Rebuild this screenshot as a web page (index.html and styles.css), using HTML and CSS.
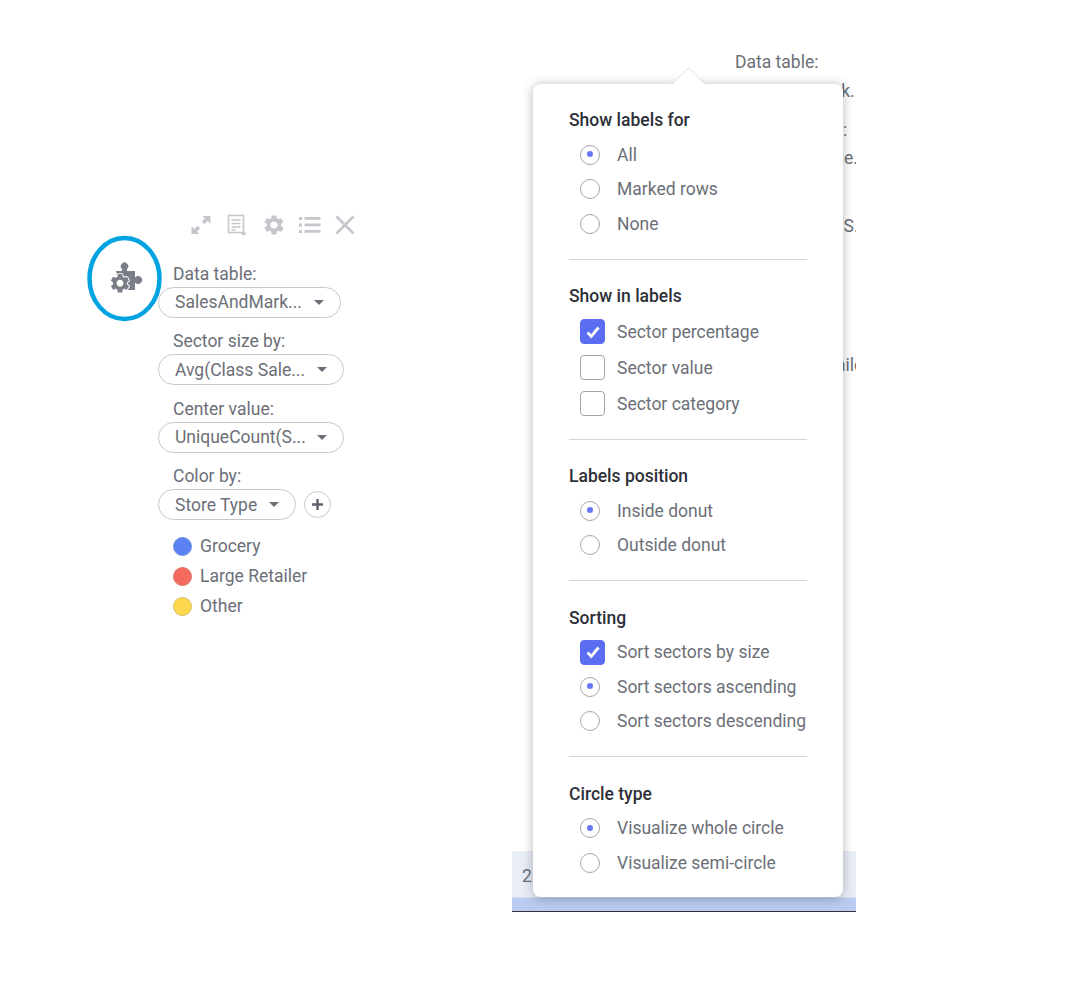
FILE: index.html
```html
<!DOCTYPE html>
<html lang="en">
<head>
<meta charset="utf-8">
<title>Donut chart properties</title>
<link rel="stylesheet" href="styles.css">
</head>
<body>
<svg class="defs" width="0" height="0" aria-hidden="true">
  <symbol id="gear" viewBox="0 0 24 24"><path d="M19.14 12.94c.04-.3.06-.61.06-.94 0-.32-.02-.64-.07-.94l2.03-1.58c.18-.14.23-.41.12-.61l-1.92-3.32c-.12-.22-.37-.29-.59-.22l-2.39.96c-.5-.38-1.03-.7-1.62-.94l-.36-2.54c-.04-.24-.24-.41-.48-.41h-3.84c-.24 0-.43.17-.47.41l-.36 2.54c-.59.24-1.13.57-1.62.94l-2.39-.96c-.22-.08-.47 0-.59.22L2.74 8.87c-.12.21-.08.47.12.61l2.03 1.58c-.05.3-.09.63-.09.94s.02.64.07.94l-2.03 1.58c-.18.14-.23.41-.12.61l1.92 3.32c.12.22.37.29.59.22l2.39-.96c.5.38 1.03.7 1.62.94l.36 2.54c.05.24.24.41.48.41h3.84c.24 0 .44-.17.47-.41l.36-2.54c.59-.24 1.13-.56 1.62-.94l2.39.96c.22.08.47 0 .59-.22l1.92-3.32c.12-.22.07-.47-.12-.61l-2.01-1.58zM12 15.6c-1.98 0-3.6-1.62-3.6-3.6s1.62-3.6 3.6-3.6 3.6 1.62 3.6 3.6-1.62 3.6-3.6 3.6z"/></symbol>
</svg>

<main class="stage">
  <section class="widget">
    <div class="toolbar">
      <svg class="tool" width="22" height="22" viewBox="0 0 22 22"><path d="M12.5 2h8v8l-3-3-3.2 3.2-2.5-2.5L15 4.500zM9.500 20h-8v-8l3 3 3.200-3.200 2.500 2.500L7 17.500z"/></svg>
      <svg class="tool" width="24" height="24" viewBox="0 0 24 24"><path class="tool-line" d="M3.500 2.500h15v17h-15zM6.500 7h9M6.500 10.500h9M6.500 14h9M6.500 17h4"/><path d="M15 19.500h7l-3.500 3.500z"/></svg>
      <svg class="tool" width="24" height="24"><use href="#gear"/></svg>
      <svg class="tool" width="22" height="24" viewBox="0 0 22 24"><path d="M0 4h3v3H0zM0 10.500h3v3H0zM0 17h3v3H0zM5.500 4h16v2.800h-16zM5.500 10.500h16v2.800h-16zM5.500 17h16v2.800h-16z"/></svg>
      <svg class="tool" width="22" height="24" viewBox="0 0 22 24"><path class="tool-x" d="M2.500 3.500l17 17M19.500 3.500l-17 17"/></svg>
    </div>
    <div class="config">
      <div class="badge">
        <svg class="badge-ring" width="76" height="88" viewBox="0 0 76 88"><ellipse cx="37.500" cy="43.500" rx="35" ry="40.500"/></svg>
        <svg class="badge-icon" width="42" height="42" viewBox="0 0 42 42">
          <path d="M11 13h6v-2a3.700 3.700 0 1 1 5 0v2h8v6.500a4 4 0 1 1 0 5V32H16z"/>
          <circle class="badge-hole" cx="15" cy="25.300" r="6"/>
          <use href="#gear" x="3.500" y="13.800" width="23" height="23" class="badge-gear"/>
        </svg>
      </div>
      <div class="fields">
        <div class="field">
          <div class="field-label">Data table:</div>
          <div class="pill pill-data"><span>SalesAndMark...</span><i class="caret"></i></div>
        </div>
        <div class="field">
          <div class="field-label">Sector size by:</div>
          <div class="pill pill-wide"><span>Avg(Class Sale...</span><i class="caret"></i></div>
        </div>
        <div class="field">
          <div class="field-label">Center value:</div>
          <div class="pill pill-wide"><span>UniqueCount(S...</span><i class="caret"></i></div>
        </div>
        <div class="field">
          <div class="field-label">Color by:</div>
          <div class="pill-row">
            <div class="pill pill-short"><span>Store Type</span><i class="caret"></i></div>
            <div class="add"><svg width="13" height="13" viewBox="0 0 13 13"><path d="M6.500 1v11M1 6.500h11"/></svg></div>
          </div>
        </div>
        <ul class="legend">
          <li><i class="dot dot-blue"></i>Grocery</li>
          <li><i class="dot dot-red"></i>Large Retailer</li>
          <li><i class="dot dot-yellow"></i>Other</li>
        </ul>
      </div>
    </div>
  </section>

  <section class="behind">
    <div class="fields fields-ghost">
      <div class="field">
        <div class="field-label">Data table:</div>
        <div class="pill pill-data"><span>SalesAndMark...</span></div>
      </div>
      <div class="field">
        <div class="field-label">Sector size by:</div>
        <div class="pill pill-wide"><span>Avg(Class Sale...</span></div>
      </div>
      <div class="field">
        <div class="field-label">Center value:</div>
        <div class="pill pill-wide"><span>UniqueCount(S...</span></div>
      </div>
      <div class="field">
        <div class="field-label">Color by:</div>
        <div class="pill pill-short"><span>Store Type</span></div>
      </div>
      <ul class="legend">
        <li><i class="dot"></i>Grocery</li>
        <li><i class="dot"></i>Large Retailer</li>
        <li><i class="dot"></i>Other</li>
      </ul>
    </div>
    <div class="strip"><span>2</span></div>
  </section>

  <section class="popover">
    <div class="group">
      <h3>Show labels for</h3>
      <label class="row radio-row"><i class="radio on"></i>All</label>
      <label class="row radio-row"><i class="radio"></i>Marked rows</label>
      <label class="row radio-row"><i class="radio"></i>None</label>
    </div>
    <div class="group group-tight">
      <h3>Show in labels</h3>
      <label class="row check-row"><i class="check on"><svg width="16" height="16" viewBox="0 0 16 16"><path d="M2.500 8.500l3.800 3.800L13.500 3.500"/></svg></i>Sector percentage</label>
      <label class="row check-row"><i class="check"></i>Sector value</label>
      <label class="row check-row"><i class="check"></i>Sector category</label>
    </div>
    <div class="group">
      <h3>Labels position</h3>
      <label class="row radio-row"><i class="radio on"></i>Inside donut</label>
      <label class="row radio-row"><i class="radio"></i>Outside donut</label>
    </div>
    <div class="group">
      <h3>Sorting</h3>
      <label class="row check-row sort-check"><i class="check on"><svg width="16" height="16" viewBox="0 0 16 16"><path d="M2.500 8.500l3.800 3.800L13.500 3.500"/></svg></i>Sort sectors by size</label>
      <label class="row radio-row"><i class="radio on"></i>Sort sectors ascending</label>
      <label class="row radio-row"><i class="radio"></i>Sort sectors descending</label>
    </div>
    <div class="group">
      <h3>Circle type</h3>
      <label class="row radio-row"><i class="radio on"></i>Visualize whole circle</label>
      <label class="row radio-row"><i class="radio"></i>Visualize semi-circle</label>
    </div>
  </section>
</main>
</body>
</html>
```

FILE: styles.css
```css
* { box-sizing: border-box; }

html, body {
  margin: 0;
  padding: 0;
  background: #fff;
}

body {
  font-family: Roboto, "Liberation Sans", sans-serif;
  font-size: 17.500px;
  color: #6c6f78;
  overflow: hidden;
}

.defs { position: absolute; }

.stage {
  position: relative;
  width: 1088px;
  height: 982px;
}

/* Left widget */
.widget {
  position: absolute;
  left: 88px;
  top: 213px;
  width: 280px;
}

.toolbar {
  display: flex;
  align-items: center;
  gap: 13px;
  margin-left: 102px;
  height: 24px;
}

.tool { fill: #c5c7cc; flex: none; }
.tool-line { fill: none; stroke: #c5c7cc; stroke-width: 1.6; }
.tool-x { fill: none; stroke: #c5c7cc; stroke-width: 2.600; }

.config {
  display: flex;
  align-items: flex-start;
  margin-top: -2px;
}

.badge {
  position: relative;
  flex: none;
  width: 70px;
  height: 88px;
}

.badge-ring {
  position: absolute;
  left: -1px;
  top: 0;
  fill: none;
  stroke: #00a3e2;
  stroke-width: 4.500;
}

.badge-icon {
  position: absolute;
  left: 17px;
  top: 23px;
  fill: #7b7e87;
}

.badge-hole { fill: #fff; }
.badge-gear { fill: #7b7e87; stroke: #fff; stroke-width: 2; paint-order: stroke; }

.fields {
  flex: none;
  padding-top: 25.500px;
}

.field {
  height: 67.500px;
}

.field-label {
  padding-left: 15px;
  height: 26px;
  line-height: 26px;
  white-space: nowrap;
}

.pill {
  display: flex;
  align-items: center;
  justify-content: space-between;
  height: 31px;
  padding: 0 16px;
  border: 1px solid #c6c8cc;
  border-radius: 16px;
  background: #fff;
  white-space: nowrap;
}

.pill-data { width: 183px; }
.pill-wide { width: 186px; }
.pill-short { width: 138px; }

.pill-row {
  display: flex;
  align-items: center;
  gap: 8px;
}

.caret {
  flex: none;
  width: 0;
  height: 0;
  border-left: 5px solid transparent;
  border-right: 5px solid transparent;
  border-top: 5.500px solid #6c6f78;
}

.add {
  display: flex;
  align-items: center;
  justify-content: center;
  width: 27px;
  height: 27px;
  border: 1px solid #c6c8cc;
  border-radius: 50%;
}

.add path { stroke: #5f626b; stroke-width: 2.400; fill: none; }

.legend {
  list-style: none;
  margin: 0;
  padding: .5px 0 0 15px;
}

.legend li {
  display: flex;
  align-items: center;
  gap: 8px;
  height: 30px;
  white-space: nowrap;
}

.dot {
  flex: none;
  width: 19px;
  height: 19px;
  border-radius: 50%;
}

.dot-blue { background: #5b82f2; border: 1px solid #6f8fe0; }
.dot-red { background: #f56a5c; border: 1px solid #d9756b; }
.dot-yellow { background: #ffd84f; border: 1px solid #d8c061; }

/* What lies behind the popover */
.behind {
  position: absolute;
  left: 512px;
  top: 38px;
  width: 344px;
  height: 874px;
  overflow: hidden;
}

.fields-ghost {
  margin-left: 208px;
  padding-top: 11px;
  width: 300px;
}

.fields-ghost .pill {
  border-color: transparent;
  background: transparent;
}

/* Only the tail of this value shows beside the popover */
.fields-ghost .pill-data span { clip-path: inset(0 0 0 105px); }

.fields-ghost .dot { visibility: hidden; }

.strip {
  position: absolute;
  left: 0;
  right: 0;
  bottom: 0;
  height: 61px;
  padding: 15px 0 0 10px;
  background: linear-gradient(#e9edf6 0, #e9edf6 46px, #b9cbef 47px, #b9cbef 60px, #333 60px);
}

/* Popover */
.popover {
  position: absolute;
  left: 533px;
  top: 84px;
  width: 310px;
  height: 813px;
  padding: 23px 36px 0;
  background: #fff;
  border-radius: 8px;
  box-shadow: 0 1px 12px rgba(0, 0, 0, .28);
}

.popover::before {
  content: "";
  position: absolute;
  left: 143px;
  top: -12px;
  width: 24px;
  height: 24px;
  background: #fff;
  transform: rotate(45deg);
  border-top: 1px solid #e2e2e4;
  border-left: 1px solid #e2e2e4;
  border-radius: 2px 0 0 0;
}

.group {
  position: relative;
  width: 238px;
  border-bottom: 1px solid #d5d6d9;
  padding-bottom: 17.500px;
  margin-bottom: 23.500px;
}

.group-tight { margin-bottom: 23.200px; }

.group:last-child { border-bottom: 0; }

h3 {
  margin: 0 0 4.500px;
  font-size: 17.500px;
  font-weight: 500;
  line-height: 26px;
  color: #2e3038;
}

.row {
  display: flex;
  align-items: center;
  padding-left: 11px;
  white-space: nowrap;
}

.radio-row { height: 34.500px; }
.check-row { height: 36px; }

.radio {
  flex: none;
  position: relative;
  width: 20px;
  height: 20px;
  margin-right: 17px;
  border: 1.500px solid #a3a5ab;
  border-radius: 50%;
}

.radio.on::after {
  content: "";
  position: absolute;
  left: 5.500px;
  top: 5.500px;
  width: 6px;
  height: 6px;
  border-radius: 50%;
  background: #6478f6;
}

.check {
  flex: none;
  display: flex;
  align-items: center;
  justify-content: center;
  width: 25px;
  height: 25px;
  margin-right: 12px;
  border: 1.500px solid #a3a5ab;
  border-radius: 4px;
}

.check.on {
  background: #5b6ef2;
  border-color: #5b6ef2;
}

.check path {
  fill: none;
  stroke: #fff;
  stroke-width: 2.800;
}

.sort-check { height: 34.500px; }
```
